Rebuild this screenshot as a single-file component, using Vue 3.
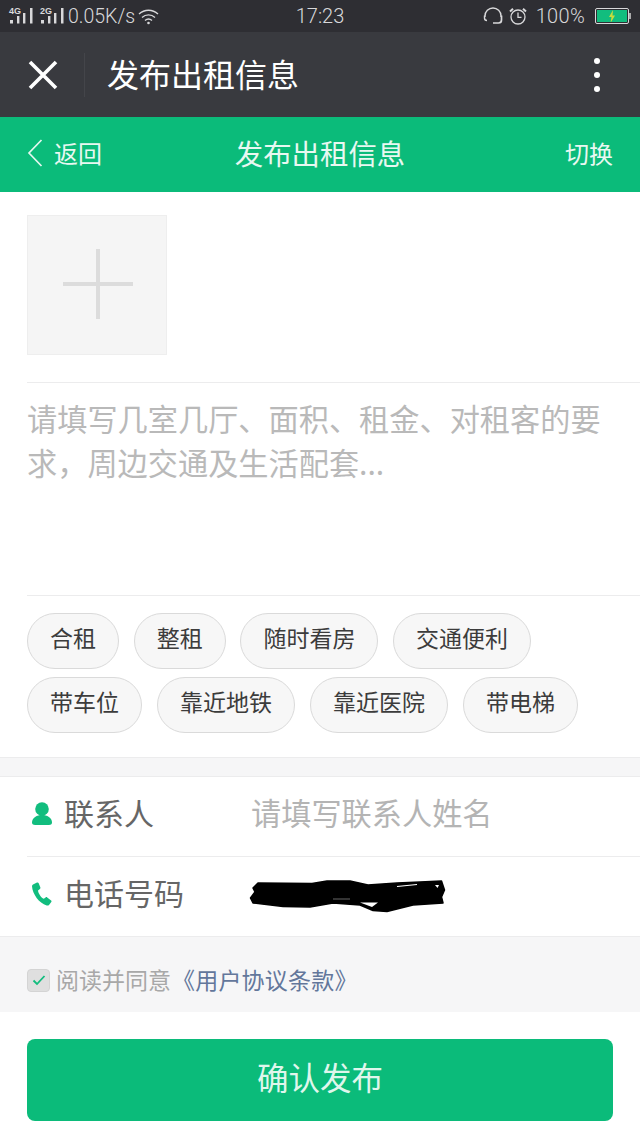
<script setup>
const row1 = ['合租', '整租', '随时看房', '交通便利']
const row2 = ['带车位', '靠近地铁', '靠近医院', '带电梯']
</script>

<template>
  <div class="page">
    <header class="status">
      <div class="st-left">
        <span class="sig first-sig"><i class="net">4G</i><svg width="23" height="16" viewBox="0 0 23 16"><g fill="#d8d8da"><rect x="0" y="12" width="3" height="3.500"/><rect x="7" y="8" width="2.400" height="7.500"/><rect x="13" y="5" width="2.400" height="10.500"/><rect x="20" y="0" width="2.500" height="15.500"/></g></svg></span>
        <span class="sig"><i class="net">2G</i><svg width="23" height="16" viewBox="0 0 23 16"><g fill="#d8d8da"><rect x="0" y="12" width="3" height="3.500"/><rect x="7" y="8" width="2.400" height="7.500"/><rect x="13" y="5" width="2.400" height="10.500"/><rect x="20" y="0" width="2.500" height="15.500"/></g></svg></span>
        <span class="speed">0.05K/s</span>
        <svg class="wifi" width="21" height="17" viewBox="0 0 21 17" fill="none" stroke="#d8d8da" stroke-width="1.400"><path d="M1 6C6.500 1 14.500 1 20 6"/><path d="M4 9.500C7.800 6 13.200 6 17 9.500"/><path d="M7 12.500C9 10.800 12 10.800 14 12.500"/><circle cx="10.500" cy="15" r="1.300" fill="#d8d8da" stroke="none"/></svg>
      </div>
      <span class="time">17:23</span>
      <div class="st-right">
        <svg class="hs" width="20" height="18" viewBox="0 0 20 18" fill="none" stroke="#d8d8da" stroke-width="1.400"><path d="M2 10V9a8 8 0 0 1 16 0v1"/><path d="M1.500 8.500v2.500a2.500 2.500 0 0 0 2.500 2.500"/><path d="M18.500 8.500v4.500a3 3 0 0 1-3 3H10" stroke-width="1.700"/></svg>
        <svg class="alarm" width="18" height="18" viewBox="0 0 18 18" fill="none" stroke="#d8d8da" stroke-width="1.300"><circle cx="9" cy="10" r="7"/><path d="M9 5.500v4.800h3.500"/><path d="M1 4.500L4 1.800M17 4.500L14 1.800" stroke-width="2"/></svg>
        <span class="pct">100%</span>
        <span class="batt"><span class="batt-fill"><svg width="8" height="13" viewBox="0 0 8 13"><path d="M5 0L1 7h2.500L2.500 13 7 5.500H4.500z" fill="#c8dc3c"/></svg></span></span>
      </div>
    </header>

    <div class="wx">
      <svg class="close" width="30" height="30" viewBox="0 0 30 30" stroke="#fff" stroke-width="3.600" fill="none"><path d="M2 2L28 28M28 2L2 28"/></svg>
      <span class="wx-line"></span>
      <span class="wx-title">发布出租信息</span>
      <span class="dots"><i></i><i></i><i></i></span>
    </div>

    <div class="nav">
      <div class="back">
        <svg width="16" height="28" viewBox="0 0 16 28" fill="none" stroke="#e4f7ef" stroke-width="1.700"><path d="M14.500 1L2 14l12.500 13"/></svg>
        <span>返回</span>
      </div>
      <span class="nav-title">发布出租信息</span>
      <span class="switch">切换</span>
    </div>

    <main class="card">
      <div class="upload-wrap">
        <div class="upload"><span class="plus"></span></div>
      </div>
      <div class="desc">请填写几室几厅、面积、租金、对租客的要求，周边交通及生活配套...</div>
      <div class="tags">
        <div class="tag-row">
          <span v-for="t in row1" :key="t" class="tag">{{ t }}</span>
        </div>
        <div class="tag-row wide">
          <span v-for="t in row2" :key="t" class="tag">{{ t }}</span>
        </div>
      </div>
    </main>

    <section class="form">
      <div class="field">
        <svg class="ficon" width="22" height="26" viewBox="0 0 22 26"><circle cx="11" cy="8" r="6.800" fill="#12bd7e"/><path d="M1 21.500c0-5 5-7.500 10-7.500s10 2.500 10 7.500c0 1.800-1.500 2.500-3 2.500H4c-1.500 0-3-.7-3-2.500z" fill="#12bd7e"/></svg>
        <span class="flabel">联系人</span>
        <span class="fval">请填写联系人姓名</span>
      </div>
      <div class="field">
        <svg class="ficon" width="22" height="26" viewBox="0 0 22 26"><path d="M2 3.500L6 1.500c.8-.3 1.400 0 1.700.7l1.700 4.300c.2.600 0 1.200-.5 1.500L7 9.500c.4 3 3 7 5.800 8.300l1.800-1.400c.5-.4 1.100-.4 1.600 0l3.900 3c.5.400.6 1 .2 1.500l-2.300 3c-.6.700-1.400.8-2.300.5C8 22 1.500 13 1 5.200c0-.8.300-1.400 1-1.700z" fill="#12bd7e"/></svg>
        <span class="flabel">电话号码</span>
        <svg class="scribble" width="200" height="34" viewBox="0 0 200 34"><polygon points="9,3 6,6 4,8 6,12 1.500,18 4,23 34,26.500 61,27 84,23 111,25 124,30.500 138,31.500 164,25 194,23 192.500,17 195.500,10 192.500,1 171,2 148,3 119,5 101,1 78,1 63,3.500" fill="#000" stroke="#000" stroke-width="1.500" stroke-linejoin="round"/><path d="M148 6.500L168 4.500" stroke="#fff" stroke-width="1.200" fill="none"/><polygon points="186,5 190,5 188.500,8" fill="#fff"/><path d="M84 19H101" stroke="#666" stroke-width="1" fill="none"/><polygon points="111,22.500 129,22.500 123,27" fill="#fff"/></svg>
      </div>
    </section>

    <div class="agree">
      <span class="check"><svg width="14" height="12" viewBox="0 0 14 12" fill="none" stroke="#12bd7e" stroke-width="1.800"><path d="M1.500 6.500L5 10l7.500-8"/></svg></span>
      <span class="read">阅读并同意</span><span class="link">《用户协议条款》</span>
    </div>

    <div class="footer">
      <button class="submit">确认发布</button>
    </div>
  </div>
</template>

<style>
html, body { margin: 0; background: #fff; }
</style>

<style scoped>
.page {
  width: 640px;
  height: 1138px;
  overflow: hidden;
  display: flex;
  flex-direction: column;
  font-family: "Noto Sans CJK SC", "Noto Sans", sans-serif;
  background: #f6f6f7;
}
.status {
  height: 32px;
  flex: none;
  background: #2e2e33;
  color: #d8d8da;
  display: grid;
  grid-template-columns: 1fr auto 1fr;
  align-items: center;
  padding: 0 9px;
  box-sizing: border-box;
  font-family: "Roboto", sans-serif;
  font-size: 20px;
  font-weight: 300;
}
.st-left, .st-right { display: flex; align-items: center; }
.st-right { justify-content: flex-end; margin-right: 2px; }
.sig { position: relative; display: block; width: 24px; height: 16px; margin-right: 4px; }
.first-sig { width: 31px; margin-right: 0; }
.sig svg { position: absolute; left: 1px; bottom: 0; }
.net { position: absolute; left: 0; top: -2px; font: 700 9px "Liberation Sans", sans-serif; color: #d8d8da; }
.speed { font-size: 19.500px; }
.wifi { margin-left: 3px; }
.alarm { margin-left: 6px; }
.pct { margin-left: 9px; letter-spacing: 0.300px; }
.batt {
  display: block;
  position: relative;
  width: 34px;
  height: 16px;
  margin-left: 10px;
  border: 1px solid #d8d8da;
  border-radius: 2px;
  padding: 1px;
  box-sizing: border-box;
}
.batt::after {
  content: "";
  position: absolute;
  right: -3px;
  top: 4px;
  width: 2px;
  height: 6px;
  background: #aaa;
}
.batt-fill {
  display: flex;
  align-items: center;
  justify-content: center;
  height: 100%;
  background: #12bd7e;
  overflow: hidden;
}
.wx {
  height: 85px;
  background: #393a3f;
  display: flex;
  align-items: center;
  color: #fff;
  flex: none;
}
.close { margin-left: 28px; }
.wx-line { width: 1px; height: 44px; margin-left: 26px; background: #44454a; }
.wx-title { margin-left: 22px; padding-bottom: 3px; font-size: 32px; line-height: 1; }
.dots { margin-left: auto; margin-right: 40px; display: flex; flex-direction: column; gap: 8px; }
.dots i { width: 6px; height: 6px; border-radius: 50%; background: #fff; display: block; }
.nav {
  height: 75px;
  flex: none;
  background: #0bbb7a;
  color: #e8f8f1;
  display: grid;
  grid-template-columns: 1fr auto 1fr;
  align-items: center;
  padding: 0 27px 4px;
  box-sizing: border-box;
}
.back { display: flex; align-items: center; gap: 11px; font-size: 24px; }
.nav-title { font-size: 28.400px; }
.switch { justify-self: end; font-size: 24px; }
.card { background: #fff; flex: none; border-bottom: 1px solid #ececed; }
.upload-wrap {
  padding: 23px 0 27px;
  margin-left: 27px;
  border-bottom: 1px solid #ececed;
}
.upload {
  width: 140px;
  height: 140px;
  background: #f5f5f5;
  border: 1px solid #eeeeee;
  box-sizing: border-box;
  display: flex;
  align-items: center;
  justify-content: center;
}
.plus { position: relative; display: block; width: 70px; height: 70px; margin: 0 0 2px 2px; }
.plus::before { content: ""; position: absolute; left: 0; right: 0; top: 33px; height: 4px; background: #dcdcdc; }
.plus::after { content: ""; position: absolute; top: 0; bottom: 0; left: 33px; width: 4px; background: #dcdcdc; }
.desc {
  margin-left: 27px;
  height: 213px;
  padding: 13px 30px 0 0;
  box-sizing: border-box;
  font-size: 30.200px;
  line-height: 44px;
  color: #b9b9b9;
  border-bottom: 1px solid #ececed;
}
.tags { padding: 17px 0 24px 27px; display: flex; flex-direction: column; gap: 8px; }
.tag-row { display: flex; gap: 14.700px; }
.tag-row.wide { gap: 15px; }
.tag {
  height: 56px;
  padding: 0 22px;
  border: 1px solid #dadada;
  border-radius: 28px;
  background: #f7f7f7;
  color: #3c3c3c;
  font-size: 23px;
  line-height: 46px;
  box-sizing: border-box;
}
.form {
  margin-top: 18px;
  background: #fff;
  border-top: 1px solid #ececed;
  border-bottom: 1px solid #ececed;
  flex: none;
}
.field {
  height: 79px;
  margin-left: 27px;
  padding-bottom: 6px;
  box-sizing: border-box;
  display: flex;
  align-items: center;
}
.field + .field { height: 80px; border-top: 1px solid #ececed; }
.ficon { margin-left: 4px; flex: none; }
.flabel { margin-left: 11px; font-size: 30px; line-height: 40px; padding-bottom: 4px; color: #666; width: 187px; flex: none; }
.fval { font-size: 30.200px; line-height: 40px; padding-bottom: 4px; color: #b4b4b4; }
.scribble { margin-left: -2px; margin-top: 6px; overflow: visible; }
.agree {
  height: 75px;
  padding: 11px 0 0 27px;
  box-sizing: border-box;
  display: flex;
  align-items: center;
  font-size: 23px;
  color: #a8a8a8;
  flex: none;
}
.read, .link { padding-bottom: 2px; }
.check {
  width: 23px;
  height: 23px;
  border-radius: 4px;
  background: #dfdfdf;
  border: 1px solid #d4d4d4;
  box-sizing: border-box;
  display: flex;
  align-items: center;
  justify-content: center;
  margin-right: 6px;
}
.link { color: #63779b; margin-left: 1px; letter-spacing: 0.200px; }
.footer {
  flex: 1;
  background: #fff;
  padding: 27px 27px 0;
}
.submit {
  display: block;
  width: 100%;
  height: 82px;
  padding: 0 0 8px;
  border: 0;
  border-radius: 8px;
  background: #0bbb7a;
  color: #dff6ec;
  font-family: inherit;
  font-size: 31.500px;
}
</style>
